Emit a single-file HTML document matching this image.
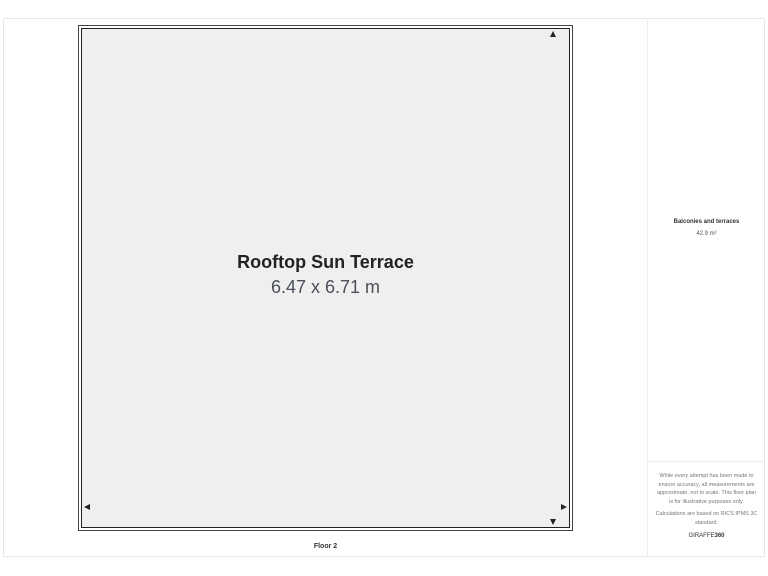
<!DOCTYPE html>
<html><head><meta charset="utf-8"><style>
*{margin:0;padding:0;box-sizing:border-box}
body{width:768px;height:576px;background:#fff;position:relative;overflow:hidden;font-family:"Liberation Sans",sans-serif}
.frame{position:absolute;left:3px;top:18px;width:762px;height:539px;border:1px solid #e6e6e6}
.vl{position:absolute;left:647px;top:18px;width:1px;height:539px;background:#ececec}
.hl{position:absolute;left:647px;top:461px;width:118px;height:1px;background:#ececec}
.outer{position:absolute;left:78px;top:25px;width:495px;height:506px;border:1.5px solid #444;background:#fff}
.inner{position:absolute;left:81px;top:28px;width:489px;height:500px;border:1.5px solid #222;background:#efefef}
.t1{position:absolute;left:78px;width:495px;top:252px;text-align:center;font-weight:bold;font-size:18px;color:#222}
.t2{position:absolute;left:78px;width:495px;top:277px;text-align:center;font-size:18px;color:#4a4f5a}
.a{position:absolute;width:0;height:0}
.s{position:absolute;left:648px;width:117px;text-align:center;color:#555}
</style></head><body>
<div class="frame"></div>
<div class="vl"></div><div class="hl"></div>
<div class="outer"></div>
<div class="inner"></div>
<div class="t1">Rooftop Sun Terrace</div>
<div class="t2">6.47 x 6.71 m</div>
<div class="a" style="left:550px;top:31px;border-left:3px solid transparent;border-right:3px solid transparent;border-bottom:6px solid #222"></div>
<div class="a" style="left:550px;top:519px;border-left:3px solid transparent;border-right:3px solid transparent;border-top:6px solid #222"></div>
<div class="a" style="left:84px;top:504px;border-top:3px solid transparent;border-bottom:3px solid transparent;border-right:6px solid #222"></div>
<div class="a" style="left:561px;top:504px;border-top:3px solid transparent;border-bottom:3px solid transparent;border-left:6px solid #222"></div>
<div style="position:absolute;left:78px;width:495px;top:543px;text-align:center;font-size:7px;font-weight:bold;color:#333">Floor 2</div>
<div class="s" style="top:219px;font-size:6px;font-weight:bold;color:#333">Balconies and terraces</div>
<div class="s" style="top:231px;font-size:6px">42.9 m²</div>
<div class="s" style="top:472px;font-size:5.5px;line-height:8.5px;color:#777;padding:0 7px">While every attempt has been made to ensure accuracy, all measurements are approximate, not to scale. This floor plan is for illustrative purposes only.</div>
<div class="s" style="top:510px;font-size:5.5px;line-height:8.5px;color:#777;padding:0 7px">Calculations are based on RICS IPMS 3C standard.</div>
<div class="s" style="top:533px;font-size:6px;color:#333">GIRAFFE<b>360</b></div>
</body></html>
